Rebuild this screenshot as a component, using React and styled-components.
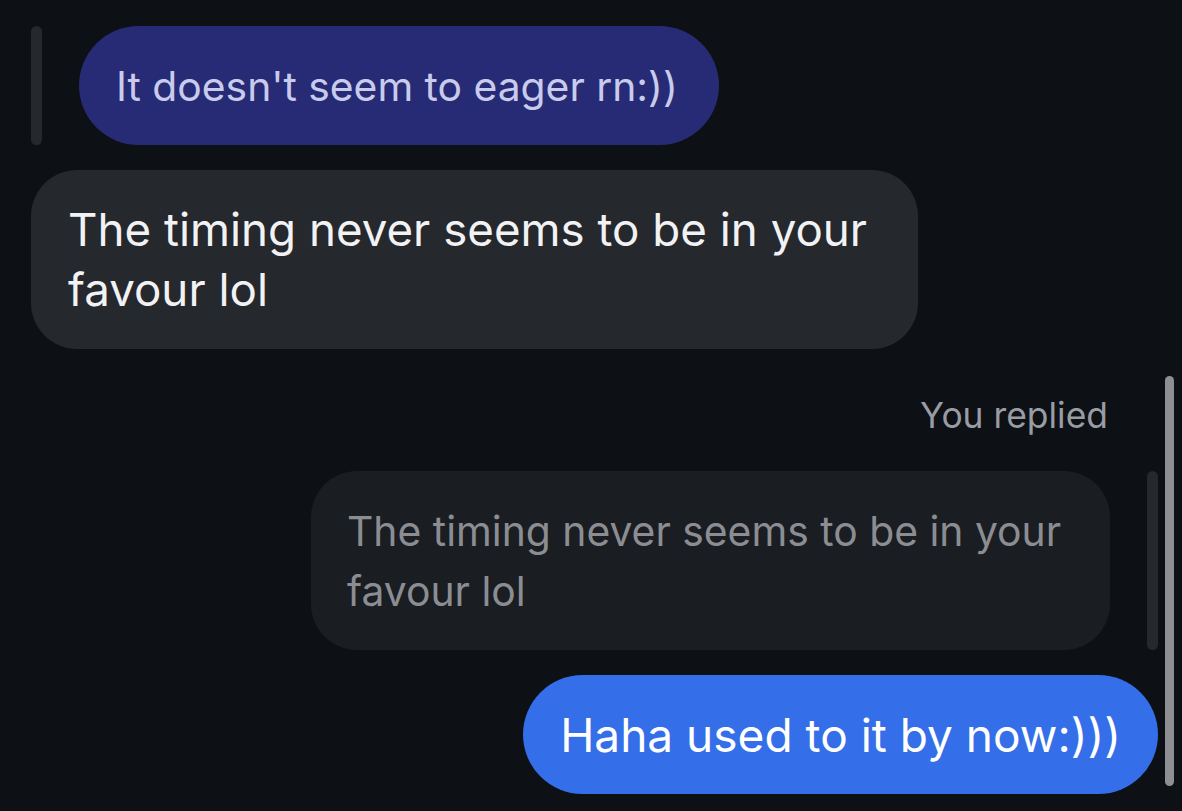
import styled, { createGlobalStyle } from "styled-components";

const GlobalStyle = createGlobalStyle`
  html, body {
    margin: 0;
    padding: 0;
    background: #0d1015;
    overflow: hidden;
  }
  body {
    font-family: Inter, "Noto Sans", sans-serif;
    -webkit-font-smoothing: antialiased;
  }
`;

const Screen = styled.div`
  position: relative;
  width: 1182px;
  height: 811px;
  background: #0d1015;
  overflow: hidden;
`;

const Thread = styled.div`
  display: flex;
  flex-direction: column;
  padding: 26px 24px 0 31px;
`;

const Row = styled.div`
  display: flex;
  justify-content: ${(p) => (p.$mine ? "flex-end" : "flex-start")};
  align-items: stretch;
  gap: ${(p) => p.$gap || 0}px;
  margin-top: ${(p) => p.$top || 0}px;
`;

const ReplyBar = styled.div`
  width: 11px;
  flex: none;
  border-radius: 6px;
  background: #25282d;
`;

const Bubble = styled.div`
  box-sizing: border-box;
  max-width: ${(p) => p.$max || 900}px;
  padding: ${(p) => p.$pad || "29.5px 37px"};
  border-radius: ${(p) => p.$radius || 60}px;
  background: ${(p) => p.$bg};
  color: ${(p) => p.$color};
  font-size: ${(p) => p.$size || 45.7}px;
  line-height: 60px;
`;

const Label = styled.div`
  margin-top: 47px;
  padding-right: 50px;
  text-align: right;
  color: #9a9ca3;
  font-size: 35.4px;
  line-height: 40px;
`;

const Scrollbar = styled.div`
  position: absolute;
  left: 1165px;
  top: 376px;
  width: 9px;
  height: 410px;
  border-radius: 5px;
  background: #8e8f94;
`;

export default function App() {
  return (
    <Screen>
      <GlobalStyle />
      <Thread>
        <Row $gap={37}>
          <ReplyBar />
          <Bubble $bg="#272b76" $color="#c9cbec" $size={40.8} $pad="29.5px 41px 29.5px 37px">
            It doesn't seem to eager rn:))
          </Bubble>
        </Row>
        <Row $top={25}>
          <Bubble $bg="#25282d" $color="#f2f2f4" $max={887} $radius={46}>
            The timing never seems to be in your favour lol
          </Bubble>
        </Row>
        <Label>You replied</Label>
        <Row $mine $gap={37} $top={35}>
          <Bubble $bg="#1a1d21" $color="#8b8d93" $size={40.85} $max={799} $radius={46} $pad="29.5px 37px 29.5px 36px">
            The timing never seems to be in your favour lol
          </Bubble>
          <ReplyBar />
        </Row>
        <Row $mine $top={25}>
          <Bubble $bg="#346ee8" $color="#ffffff" $size={46}>
            Haha used to it by now:)))
          </Bubble>
        </Row>
      </Thread>
      <Scrollbar />
    </Screen>
  );
}
